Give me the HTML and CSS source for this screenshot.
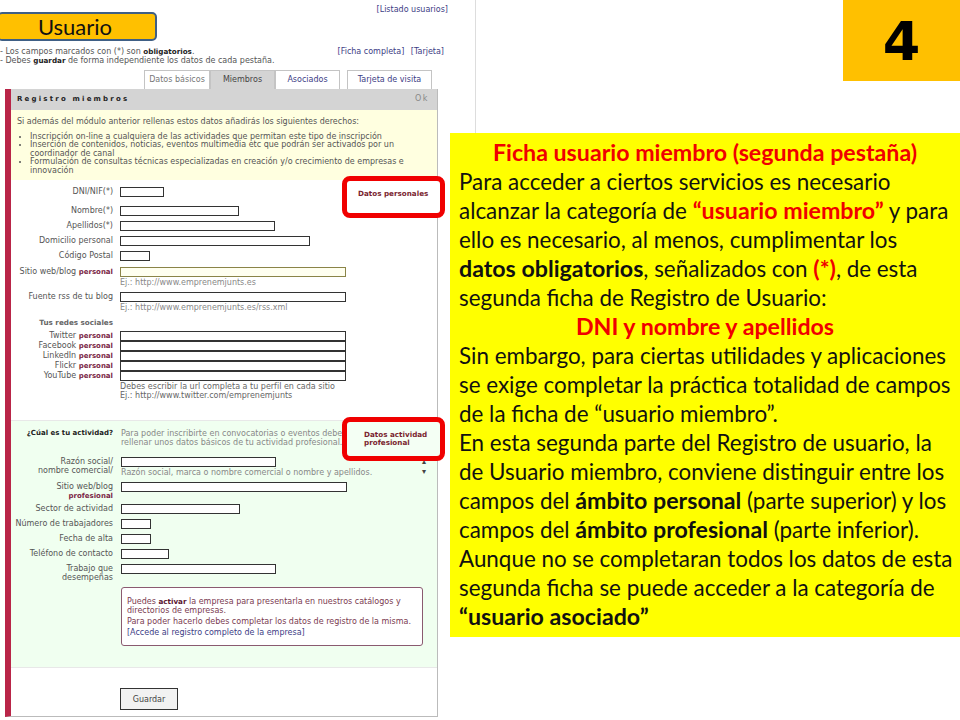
FILE: index.html
```html
<!DOCTYPE html>
<html lang="es">
<head>
    <meta charset="UTF-8">
    <title>Ficha usuario miembro</title>
    <link rel="stylesheet" href="styles.css">
</head>
<body>
<div class="slide">
    <!-- Captured form on the left -->
    <div class="shot">
        <div class="usuario">Usuario</div>
        <div class="top-link"><a>[Listado usuarios]</a></div>
        <div class="notes">
            <div>
                <div>- Los campos marcados con (*) son <b>obligatorios</b>.</div>
                <div>- Debes <b>guardar</b> de forma independiente los datos de cada pestaña.</div>
            </div>
            <div class="note-links"><a>[Ficha completa]</a> <a>[Tarjeta]</a></div>
        </div>
        <div class="tabs">
            <div class="tab tab-basic">Datos básicos</div>
            <div class="tab tab-active">Miembros</div>
            <div class="tab tab-link">Asociados</div>
            <div class="tab tab-link tab-card">Tarjeta de visita</div>
        </div>
        <div class="panel">
            <div class="panel-head">
                <span class="panel-title">Registro miembros</span>
                <span class="panel-ok">Ok</span>
            </div>
            <div class="intro">
                <p>Si además del módulo anterior rellenas estos datos añadirás los siguientes derechos:</p>
                <ul>
                    <li>Inscripción on-line a cualquiera de las actividades que permitan este tipo de inscripción</li>
                    <li>Inserción de contenidos, noticias, eventos multimedia etc que podrán ser activados por un coordinador de canal</li>
                    <li>Formulación de consultas técnicas especializadas en creación y/o crecimiento de empresas e innovación</li>
                </ul>
            </div>

            <!-- Personal fields -->
            <div class="section personal">
                <div class="row h19"><label>DNI/NIF(*)</label><span class="field w44"></span></div>
                <div class="row h15"><label>Nombre(*)</label><span class="field w119"></span></div>
                <div class="row h15"><label>Apellidos(*)</label><span class="field w155"></span></div>
                <div class="row h15"><label>Domicilio personal</label><span class="field w190"></span></div>
                <div class="row h16"><label>Código Postal</label><span class="field w30"></span></div>
                <div class="row h25"><label>Sitio web/blog <b>personal</b></label>
                    <div><span class="field w226 focus"></span><div class="hint">Ej.: http://www.emprenemjunts.es</div></div>
                </div>
                <div class="row h26"><label>Fuente rss de tu blog</label>
                    <div><span class="field w226"></span><div class="hint">Ej.: http://www.emprenemjunts.es/rss.xml</div></div>
                </div>
                <div class="row h13"><label class="label-head">Tus redes sociales</label></div>
                <div class="row h10"><label>Twitter <b>personal</b></label><span class="field w226"></span></div>
                <div class="row h10"><label>Facebook <b>personal</b></label><span class="field w226"></span></div>
                <div class="row h10"><label>LinkedIn <b>personal</b></label><span class="field w226"></span></div>
                <div class="row h10"><label>Flickr <b>personal</b></label><span class="field w226"></span></div>
                <div class="row h10"><label>YouTube <b>personal</b></label><span class="field w226"></span></div>
                <div class="row"><label></label><div class="hint hint-dark">Debes escribir la url completa a tu perfil en cada sitio<br>Ej.: http://www.twitter.com/emprenemjunts</div></div>
            </div>

            <!-- Professional fields -->
            <div class="section profesional">
                <div class="row h29"><label><b class="dark">¿Cúal es tu actividad?</b></label>
                    <div class="hint">Para poder inscribirte en convocatorias o eventos debes<br>rellenar unos datos básicos de tu actividad profesional.</div>
                </div>
                <div class="row h25"><label>Razón social/<br>nombre comercial/</label>
                    <div><span class="field w155"></span><div class="hint">Razón social, marca o nombre comercial o nombre y apellidos.</div></div>
                    <span class="spinner">▴<br>▾</span>
                </div>
                <div class="row h22"><label>Sitio web/blog<br><b>profesional</b></label><span class="field w226"></span></div>
                <div class="row h15"><label>Sector de actividad</label><span class="field w119"></span></div>
                <div class="row h15"><label>Número de trabajadores</label><span class="field w30"></span></div>
                <div class="row h15"><label>Fecha de alta</label><span class="field w30"></span></div>
                <div class="row h15"><label>Teléfono de contacto</label><span class="field w48"></span></div>
                <div class="row h23"><label>Trabajo que<br>desempeñas</label><span class="field w155"></span></div>
                <div class="activar">
                    <div>Puedes <b>activar</b> la empresa para presentarla en nuestros catálogos y</div>
                    <p>directorios de empresas.</p>
                    <p>Para poder hacerlo debes completar los datos de registro de la misma.</p>
                    <p><a>[Accede al registro completo de la empresa]</a></p>
                </div>
            </div>
            <div class="actions"><button>Guardar</button></div>
        </div>

        <!-- Red callouts drawn over the capture -->
        <div class="callout callout-personal">Datos personales</div>
        <div class="callout callout-profesional">Datos actividad<br>profesional</div>
    </div>

    <!-- Slide number and explanation -->
    <div class="aside">
        <div class="number">4</div>
        <div class="note">
            <div class="center red"><b>Ficha usuario miembro (segunda pestaña)</b></div>
            <div>Para acceder a ciertos servicios es necesario</div>
            <div>alcanzar la categoría de <b class="red">“usuario miembro”</b> y para</div>
            <div>ello es necesario, al menos, cumplimentar los</div>
            <div><b>datos obligatorios</b>, señalizados con <b class="red">(*)</b>, de esta</div>
            <div>segunda ficha de Registro de Usuario:</div>
            <div class="center red"><b>DNI y nombre y apellidos</b></div>
            <div>Sin embargo, para ciertas utilidades y aplicaciones</div>
            <div>se exige completar la práctica totalidad de campos</div>
            <div>de la ficha de “usuario miembro”.</div>
            <div>En esta segunda parte del Registro de usuario, la</div>
            <div>de Usuario miembro, conviene distinguir entre los</div>
            <div>campos del <b>ámbito personal</b> (parte superior) y los</div>
            <div>campos del <b>ámbito profesional</b> (parte inferior).</div>
            <div>Aunque no se completaran todos los datos de esta</div>
            <div>segunda ficha se puede acceder a la categoría de</div>
            <div><b>“usuario asociado”</b></div>
        </div>
    </div>
</div>
</body>
</html>
```

FILE: styles.css
```css
/* Page */
body {
    margin: 0;
    background: #fff;
}

.slide {
    position: relative;
    display: flex;
    width: 960px;
    height: 720px;
    overflow: hidden;
}

/* Left capture */
.shot {
    position: relative;
    flex: none;
    width: 450px;
    height: 720px;
    font-family: "DejaVu Sans", Verdana, sans-serif;
    font-size: 8px;
    line-height: 8.5px;
    color: #555;
}

/* thin page edge of the capture */
.shot::after {
    content: "";
    position: absolute;
    left: 475px;
    top: 0;
    width: 1px;
    height: 133px;
    background: #ddd;
}

a {
    color: #3d3d85;
}

.shot b {
    font-size: 7.2px;
    color: #222;
}

.usuario {
    position: absolute;
    left: -3px;
    top: 12px;
    box-sizing: border-box;
    width: 160px;
    height: 29px;
    padding-right: 4px;
    border: 2px solid #3f5f85;
    border-radius: 5px;
    background: #ffc000;
    font-family: Lato, sans-serif;
    font-size: 22px;
    line-height: 25px;
    text-align: center;
    color: #111;
}

.top-link {
    box-sizing: border-box;
    height: 47px;
    padding: 6px 2px 0 0;
    text-align: right;
}

.notes {
    display: flex;
    justify-content: space-between;
    box-sizing: border-box;
    height: 23px;
    padding: 1px 6px 0 0;
}

.note-links a {
    margin-left: 4px;
}

.tabs {
    display: flex;
    margin-left: 144px;
    height: 19px;
}

.tab {
    box-sizing: border-box;
    width: 65px;
    border: 1px solid #c4c4c4;
    border-bottom: 0;
    background: #fff;
    text-align: center;
    line-height: 18px;
}

.tab-basic {
    width: 66px;
    color: #777;
}

.tab-active {
    background: #d4d4d4;
    color: #444;
}

.tab-link {
    color: #3d3d85;
}

.tab-card {
    width: 85px;
    margin-left: 7px;
}

.panel {
    box-sizing: border-box;
    width: 433px;
    height: 628px;
    margin-left: 5px;
    border-left: 6px solid #b92548;
    border-right: 1px solid #bbb;
    border-bottom: 1px solid #bbb;
}

.panel-head {
    display: flex;
    justify-content: space-between;
    align-items: center;
    height: 21px;
    padding: 0 8px 0 6px;
    background: #d4d4d4;
}

.shot .panel-title {
    font-size: 7px;
    font-weight: bold;
    letter-spacing: 2.2px;
    color: #222;
}

.panel-ok {
    color: #888;
    letter-spacing: 1.5px;
}

.intro {
    box-sizing: border-box;
    height: 70px;
    padding: 8px 30px 0 6px;
    background: #ffffe0;
}

.intro p {
    margin: 0 0 6px;
}

.intro ul {
    margin: 0;
    padding-left: 13px;
}

.section {
    box-sizing: border-box;
}

.personal {
    height: 240px;
    padding-top: 7px;
}

.profesional {
    height: 248px;
    padding-top: 7px;
    background: #f0fff0;
    border-top: 1px solid #e8e8e8;
    border-bottom: 1px solid #e8e8e8;
}

/* Form rows */
.row {
    display: flex;
    gap: 7px;
}

.row label {
    flex: none;
    width: 102px;
    text-align: right;
    white-space: nowrap;
    padding-top: 1px;
}

.shot .row label b {
    font-size: 7px;
    color: #7a1f45;
}

.shot .row label .dark {
    color: #222;
}

.label-head {
    font-weight: bold;
    font-size: 7.2px;
    color: #666;
}

.h10 { height: 10px; }
.h13 { height: 13px; }
.h15 { height: 15px; }
.h16 { height: 16px; }
.h19 { height: 19px; }
.h22 { height: 22px; }
.h23 { height: 23px; }
.h25 { height: 25px; }
.h26 { height: 26px; }
.h29 { height: 29px; }

.field {
    display: block;
    box-sizing: border-box;
    height: 10px;
    border: 1px solid #333;
    background: #fff;
}

.profesional .field {
    margin-left: 1px;
}

.focus {
    border-color: #8a8448;
    background: #fffff0;
}

.w30 { width: 30px; }
.w44 { width: 44px; }
.w48 { width: 48px; }
.w119 { width: 119px; }
.w155 { width: 155px; }
.w190 { width: 190px; }
.w226 { width: 226px; }

.hint {
    margin-top: 2px;
    color: #888;
    white-space: nowrap;
}

.profesional .hint {
    margin-left: 1px;
}

.hint-dark {
    color: #666;
}

.spinner {
    position: absolute;
    left: 422px;
    font-size: 8px;
    line-height: 10px;
    color: #444;
}

.activar {
    box-sizing: border-box;
    width: 302px;
    height: 59px;
    margin: 0 0 0 110px;
    padding: 10px 5px 0;
    border: 1px solid #8a5a70;
    border-radius: 3px;
    background: #fff;
    color: #7a3a50;
}

.shot .activar b {
    color: #5a1530;
}

.activar p {
    margin: 0 0 2.5px;
}

.actions {
    padding: 20px 0 0 109px;
}

button {
    display: block;
    width: 58px;
    height: 22px;
    padding: 0;
    border: 1px solid #333;
    background: #f2f2f2;
    font-family: "DejaVu Sans", sans-serif;
    font-size: 8px;
    color: #444;
}

.callout {
    position: absolute;
    left: 342px;
    box-sizing: border-box;
    display: flex;
    align-items: center;
    width: 103px;
    border: 5px solid #f00000;
    border-radius: 8px;
    background: #fff;
    font-size: 7.2px;
    font-weight: bold;
    color: #7a1f2f;
}

.callout-personal {
    top: 176px;
    height: 42px;
    padding: 0 0 6px 11px;
}

.callout-profesional {
    top: 417px;
    height: 44px;
    padding-left: 17px;
    background: #f4fff4;
}

/* Right column */
.aside {
    flex: none;
    display: flex;
    flex-direction: column;
    width: 510px;
}

.number {
    align-self: flex-end;
    width: 117px;
    height: 81px;
    background: #ffc000;
    font-family: "DejaVu Sans", sans-serif;
    font-weight: bold;
    font-size: 54px;
    line-height: 84px;
    text-align: center;
    color: #000;
}

.note {
    box-sizing: border-box;
    height: 504px;
    margin-top: 52px;
    padding: 5px 0 0 9px;
    background: #ffff00;
    font-family: Lato, sans-serif;
    font-size: 22.4px;
    line-height: 29px;
    white-space: nowrap;
    color: #111;
}

.note b {
    font-size: 23.2px;
}

.center {
    text-align: center;
    padding-right: 9px;
}

.red {
    color: #f00000;
}
```
